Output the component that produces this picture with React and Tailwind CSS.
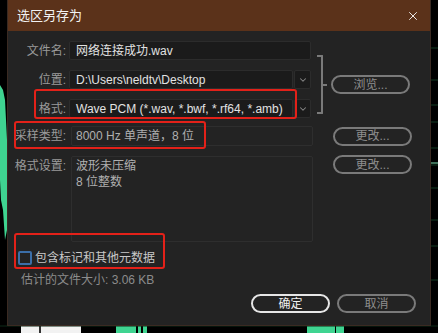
import { X, ChevronDown } from 'lucide-react'

const font = { fontFamily: '"Liberation Sans", "Noto Sans CJK SC", sans-serif' }

const Pill = ({ children, primary = false, className = '' }) => (
  <button
    className={`h-[19px] w-[79px] rounded-full border-2 text-[12px] leading-none flex items-center justify-center ${
      primary ? 'border-[#e6e6e6] text-[#f0f0f0]' : 'border-[#7a7a7a] text-[#8e8e8e]'
    } ${className}`}
  >
    {children}
  </button>
)

const Label = ({ children }) => (
  <span className="w-[61px] shrink-0 text-right pr-[3px] text-[12px] text-[#9a9a9a]">{children}</span>
)

const Background = () => (
  <svg className="absolute inset-0" width="438" height="333">
    <rect width="438" height="333" fill="#000" />
    {[48, 80, 105, 122, 148, 165, 188, 220, 246, 280].map((y) => (
      <line key={y} x1="431" x2="438" y1={y} y2={y} stroke="#123a22" />
    ))}
    <line x1="431" x2="438" y1="163" y2="163" stroke="#7fe0b0" />
    <path d="M0 85 L3 90 L5 100 L6 120 L7 140 L7 230 L5 240 L3 210 L1 200 L0 180 Z" fill="#3fd491" />
    <rect x="21" y="326" width="60" height="7" fill="#f2f2f2" />
    <rect x="39" y="326" width="2" height="7" fill="#333" />
    <rect x="116" y="326" width="20" height="7" fill="#3fd491" />
    <rect x="138" y="326" width="3" height="7" fill="#3fd491" />
    <rect x="143" y="326" width="4" height="7" fill="#3fd491" />
    <rect x="307" y="326" width="28" height="7" fill="#3fd491" />
    <rect x="336" y="326" width="8" height="7" fill="#3fd491" />
    <line x1="0" x2="438" y1="326" y2="326" stroke="#0c2a18" />
  </svg>
)

const Select = ({ children }) => (
  <div className="flex gap-[1px] w-[242px]">
    <div className="h-[19px] flex-1 bg-[#1b1b1b] border border-[#2c2c2c] rounded-[2px] flex items-center pl-[6px] text-[12px] text-[#e2e2e2] whitespace-nowrap overflow-hidden">
      {children}
    </div>
    <div className="h-[19px] w-[17px] bg-[#1b1b1b] border border-[#2c2c2c] rounded-[2px] flex items-center justify-center">
      <ChevronDown size={10} strokeWidth={2.5} className="text-[#8a8a8a]" />
    </div>
  </div>
)

export default function App() {
  return (
    <div className="relative w-[438px] h-[333px] overflow-hidden" style={font}>
      <Background />
      <div className="relative ml-[7px] w-[424px] h-[326px] bg-[#232323] border border-[#3a2a22] border-t-0 flex flex-col">
        <div className="h-[31px] bg-[#5b321a] flex items-center justify-between pl-[9px] pr-[10px]">
          <span className="text-[13px] text-[#f2f2f2]">选区另存为</span>
          <X size={14} strokeWidth={1.6} className="text-[#f5f5f5]" />
        </div>

        <div className="relative flex flex-col pt-[10px]">
          <div className="flex">
            <div className="flex flex-col gap-[10px]">
              <div className="flex items-center">
                <Label>文件名:</Label>
                <div className="h-[19px] w-[242px] bg-[#1b1b1b] border border-[#2c2c2c] rounded-[2px] flex items-center pl-[6px] text-[12px] text-[#e2e2e2]">
                  网络连接成功.wav
                </div>
              </div>
              <div className="flex items-center">
                <Label>位置:</Label>
                <Select>D:\Users\neldtv\Desktop</Select>
              </div>
              <div className="flex items-center">
                <Label>格式:</Label>
                <Select>Wave PCM (*.wav, *.bwf, *.rf64, *.amb)</Select>
              </div>
            </div>
            <div className="flex items-center ml-[6px]">
              <div className="flex items-center h-[59px] mt-[10px]">
                <div className="w-[6px] h-full border-2 border-l-0 border-[#7a7a7a] rounded-r-[1px]" />
                <div className="w-[4px] h-[2px] bg-[#7a7a7a]" />
              </div>
              <Pill className="ml-[4px] mt-[10px]">浏览...</Pill>
            </div>
          </div>

          <div className="flex items-center mt-[8px]">
            <Label>采样类型:</Label>
            <div className="h-[20px] w-[242px] ml-[2px] border border-[#2e2e2e] rounded-[2px] flex items-center pl-[4px] text-[12px] text-[#b0b0b0]">
              8000 Hz 单声道，8 位
            </div>
            <Pill className="ml-[20px]">更改...</Pill>
          </div>

          <div className="flex mt-[10px]">
            <div className="w-[61px] shrink-0 text-right pr-[3px] text-[12px] text-[#9a9a9a] pt-[1px]">格式设置:</div>
            <div className="h-[86px] w-[242px] ml-[2px] border border-[#2e2e2e] rounded-[2px] pl-[4px] pt-[1px] text-[12px] leading-[16px] text-[#b0b0b0]">
              <div>波形未压缩</div>
              <div>8 位整数</div>
            </div>
            <Pill className="ml-[20px] -mt-[1px]">更改...</Pill>
          </div>

          <div className="flex items-center mt-[7px] ml-[10px] gap-[3px]">
            <div className="w-[14px] h-[14px] border-2 border-[#3b6ea8] rounded-[2px]" />
            <span className="text-[12px] text-[#c8c8c8]">包含标记和其他元数据</span>
          </div>
          <div className="ml-[13px] mt-[4px] text-[12px] text-[#8c8c8c]">估计的文件大小: 3.06 KB</div>

          <div className="flex justify-end gap-[7px] mr-[14px] mt-[5px]">
            <Pill primary>确定</Pill>
            <Pill>取消</Pill>
          </div>

          {/* annotation boxes */}
          <div className="absolute left-[26px] top-[58px] w-[263px] h-[30px] border-2 border-[#e32119] rounded-[3px]" />
          <div className="absolute left-[6px] top-[90px] w-[192px] h-[28px] border-2 border-[#e32119] rounded-[3px]" />
          <div className="absolute left-[6px] top-[202px] w-[151px] h-[36px] border-2 border-[#e32119] rounded-[3px]" />
        </div>
      </div>
    </div>
  )
}
